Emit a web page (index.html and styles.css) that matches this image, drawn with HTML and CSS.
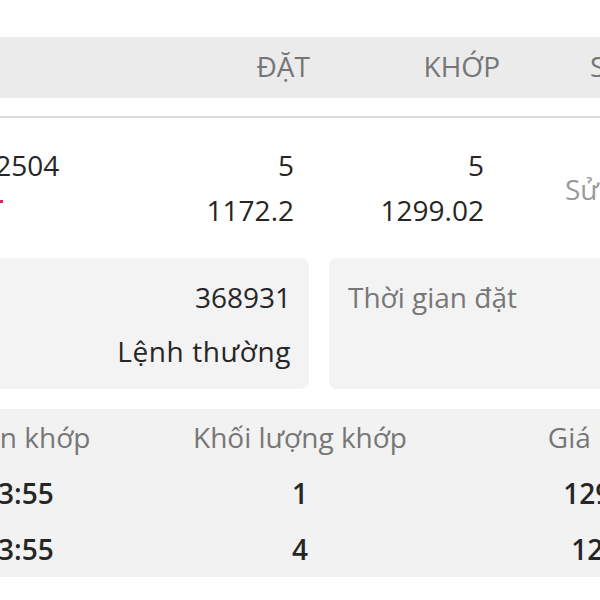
FILE: index.html
```html
<!DOCTYPE html>
<html lang="vi">

<head>
    <meta charset="UTF-8">
    <meta name="viewport" content="width=device-width, initial-scale=1.0">
    <title>Chi tiết lệnh</title>
    <link rel="stylesheet" href="styles.css">
</head>

<body>
    <div class="screen">
        <div class="order-grid head-row">
            <div class="cell"></div>
            <div class="cell num">ĐẶT</div>
            <div class="cell num">KHỚP</div>
            <div class="cell action-head">SỬA/HỦY</div>
        </div>

        <div class="order-grid order-row">
            <div class="cell name">
                <div>VN30F2504</div>
                <div><span class="side-mark"></span></div>
            </div>
            <div class="cell num value">
                <div>5</div>
                <div>1172.2</div>
            </div>
            <div class="cell num value">
                <div>5</div>
                <div>1299.02</div>
            </div>
            <div class="cell action">Sửa</div>
        </div>

        <div class="cards">
            <div class="card card-right">
                <div>368931</div>
                <div class="order-type">Lệnh thường</div>
            </div>
            <div class="card">
                <div class="label">Thời gian đặt</div>
            </div>
        </div>

        <div class="match-table">
            <div class="match-row match-head">
                <div class="time-col">Thời gian khớp</div>
                <div>Khối lượng khớp</div>
                <div class="price-col">Giá khớp</div>
            </div>
            <div class="match-row">
                <div class="time-val">10:13:55</div>
                <div>1</div>
                <div>1299.02</div>
            </div>
            <div class="match-row">
                <div class="time-val">10:13:55</div>
                <div>4</div>
                <div>1299.4</div>
            </div>
        </div>
    </div>
</body>

</html>
```

FILE: styles.css
```css
body {
    margin: 0;
    font-family: "Open Sans", "Noto Sans", sans-serif;
    font-size: 28px;
    color: #262626;
    background: #fff;
    overflow: hidden;
}

.screen {
    width: 816px;
    margin-left: -105px;
    padding: 0 16px;
}

.order-grid {
    display: grid;
    grid-template-columns: 289px 110px 190px 227px;
}

.head-row {
    margin-top: 37px;
    height: 61px;
    line-height: 59px;
    background-color: #ebebeb;
    color: #767676;
    margin-left: -16px;
    margin-right: -16px;
    padding: 0 16px;
}

.num {
    text-align: right;
}

.action-head {
    padding-left: 90px;
    white-space: nowrap;
}

.order-row {
    margin-top: 18px;
    border-top: 2px solid #dadada;
    padding-top: 25px;
    line-height: 45px;
    margin-left: -16px;
    margin-right: -16px;
    padding-left: 16px;
    padding-right: 16px;
}

.value {
    padding-right: 16px;
}

.side-mark {
    display: inline-block;
    width: 3px;
    height: 3px;
    margin-left: 89px;
    background-color: #e0245e;
    vertical-align: 18px;
}

.action {
    align-self: center;
    padding-left: 65px;
    padding-top: 2px;
    color: #9a9a9a;
}

.cards {
    display: grid;
    grid-template-columns: 1fr 1fr;
    gap: 20px;
    margin-top: 25px;
}

.card {
    background-color: #f3f3f3;
    border-radius: 8px;
    padding: 12px 18px 11px 19px;
    line-height: 54px;
    height: 108px;
}

.card-right {
    text-align: right;
}

.order-type {
    letter-spacing: 0.6px;
}

.label {
    color: #777;
}

.match-table {
    margin-top: 20px;
    background-color: #f2f2f2;
    margin-left: -16px;
    margin-right: -16px;
    padding: 0 16px;
}

.match-row {
    display: grid;
    grid-template-columns: 166px 446px 184px;
    line-height: 56px;
    text-align: center;
    font-weight: 600;
    white-space: nowrap;
}

.match-head {
    font-weight: 400;
    color: #777;
}

.time-col {
    text-align: left;
    margin-left: -13px;
}

.time-val {
    padding-left: 8px;
}

.price-col {
    padding-right: 18px;
}
```
